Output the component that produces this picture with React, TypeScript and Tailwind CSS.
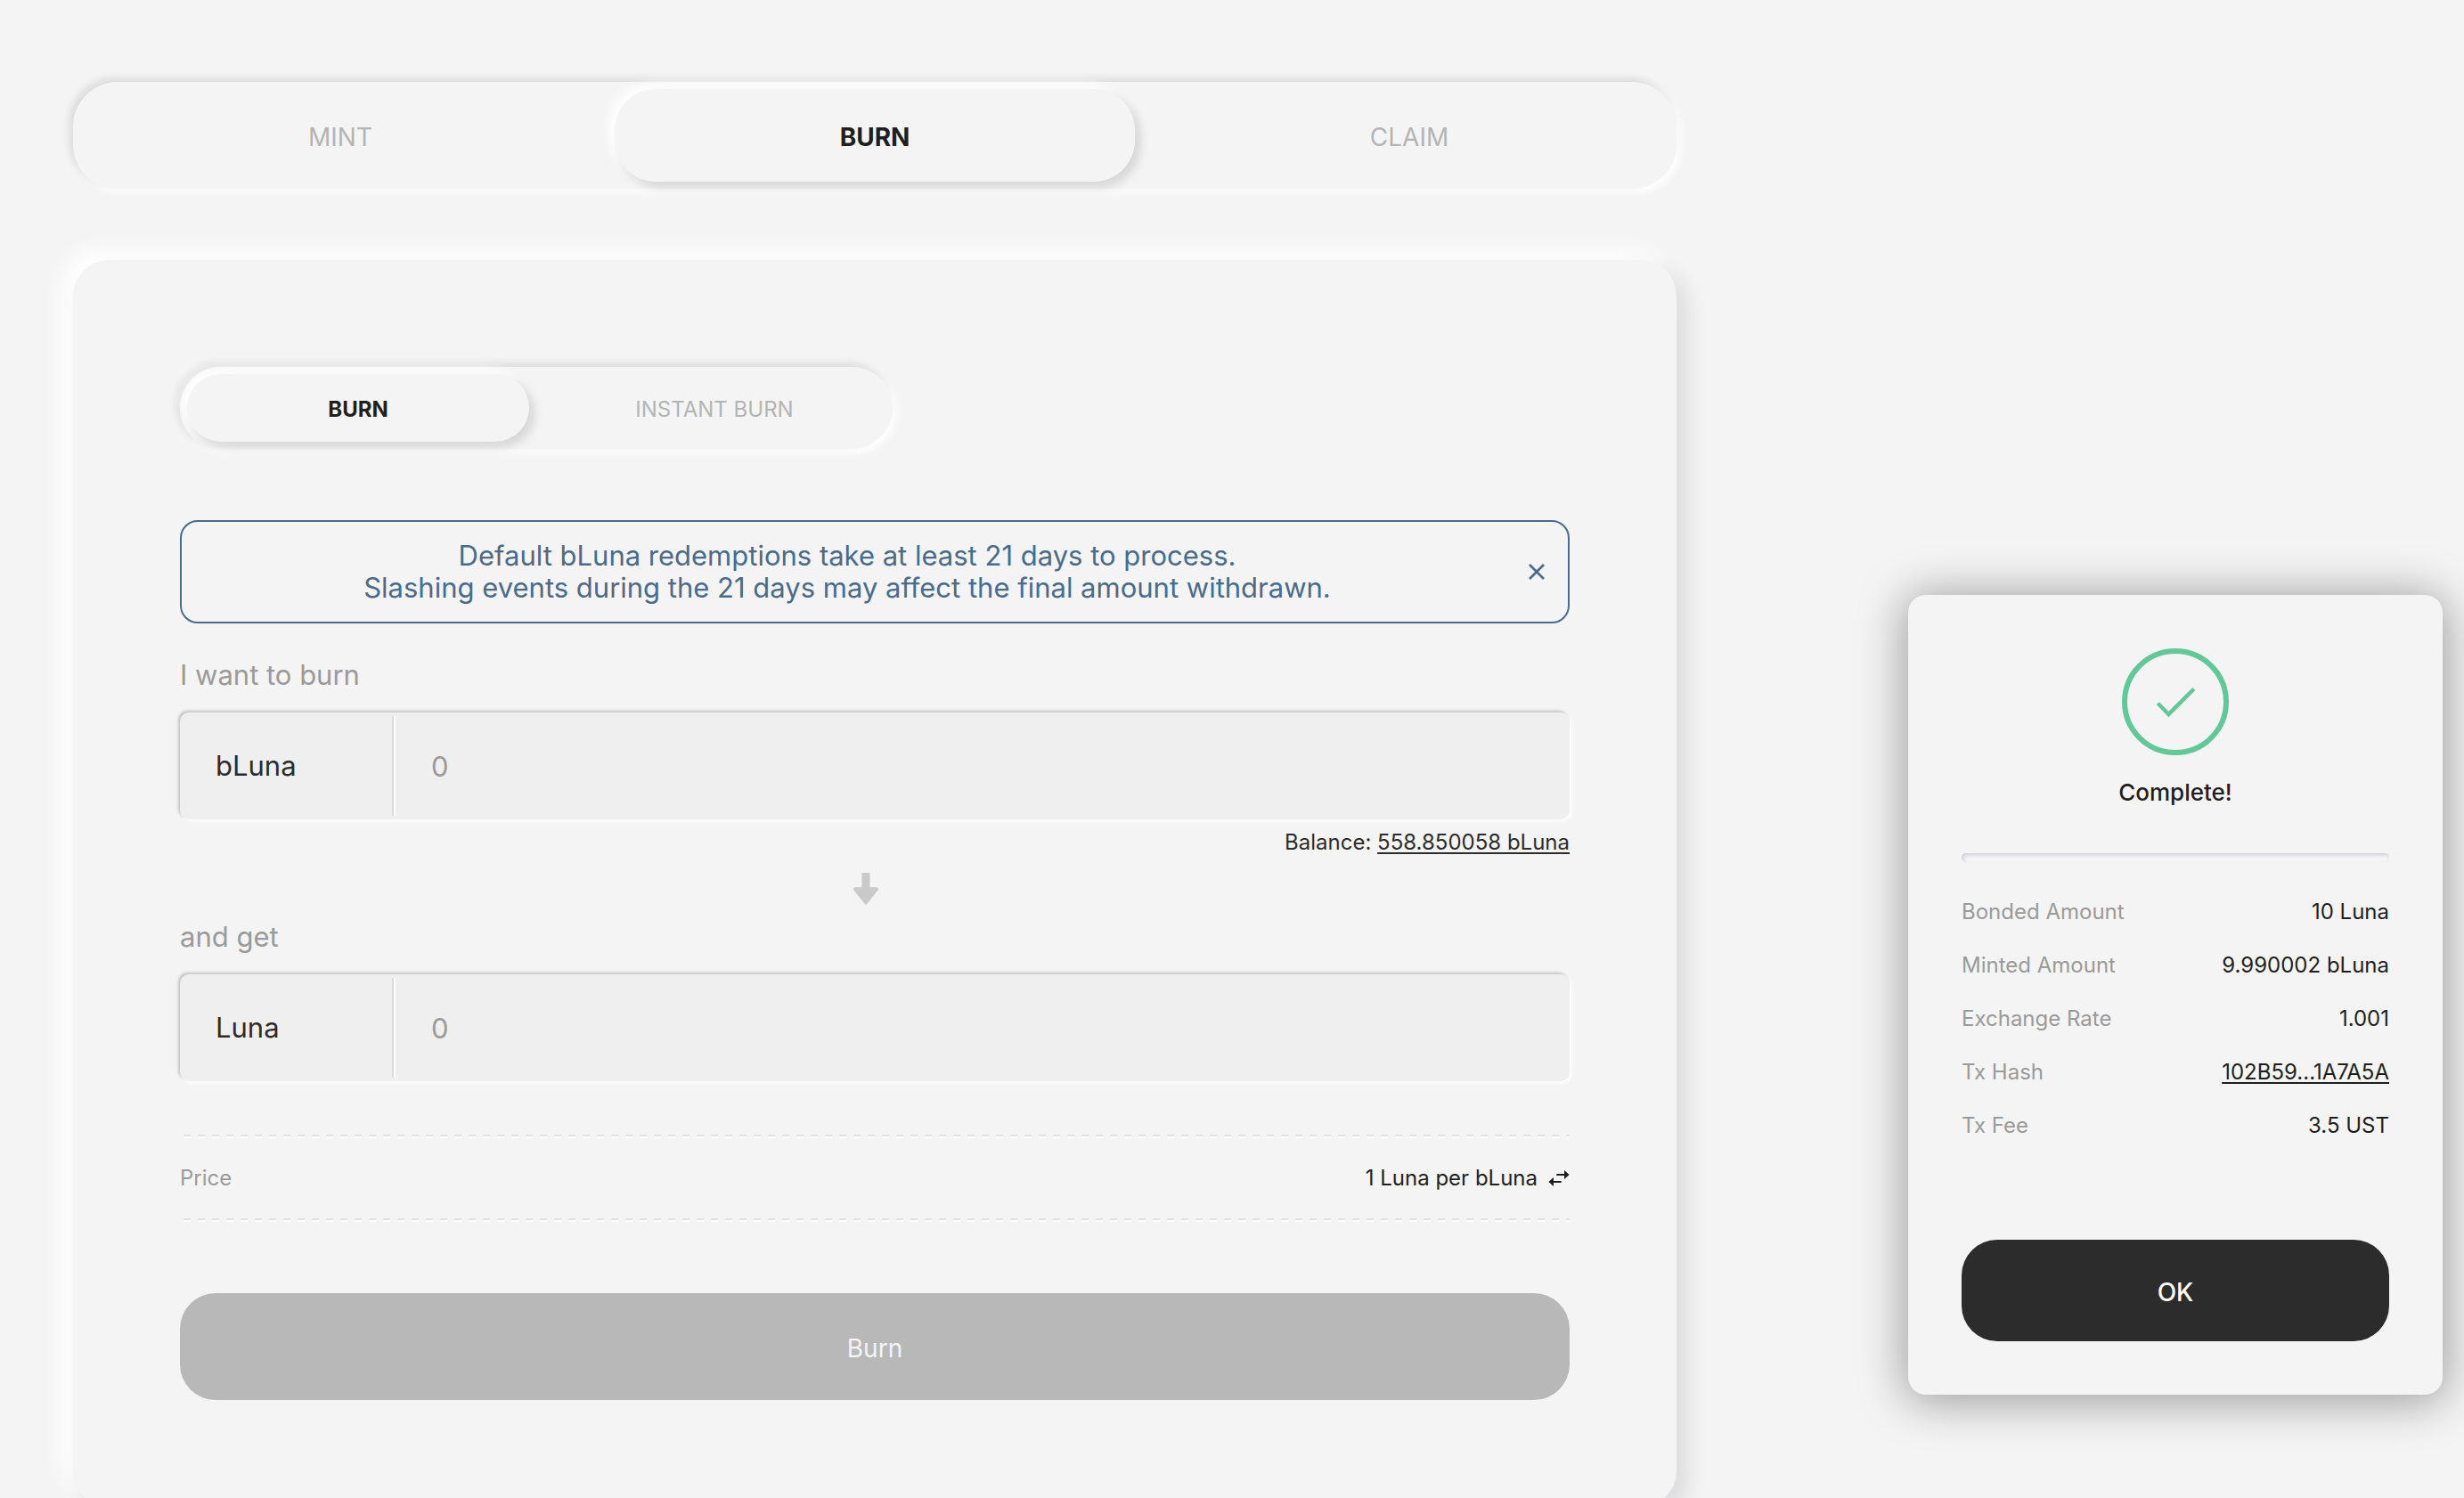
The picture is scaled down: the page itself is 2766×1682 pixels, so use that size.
import { useState } from "react";

function cx(...parts: (string | false)[]) {
  return parts.filter(Boolean).join(" ");
}

const raised =
  "bg-[#f4f4f4] shadow-[6px_6px_12px_rgba(0,0,0,0.13),-6px_-6px_12px_#ffffff]";

function Tabs({
  items,
  initial,
  size,
  label,
}: {
  items: string[];
  initial: string;
  size: "large" | "small";
  label: string;
}) {
  const [active, setActive] = useState(initial);
  return (
    <div
      role="tablist"
      aria-label={label}
      className={cx(
        "grid auto-cols-fr grid-flow-col gap-4 rounded-[50px] bg-[#f4f4f4] p-2 shadow-[-4px_-4px_8px_rgba(30,30,50,0.12),4px_4px_8px_#ffffff]",
        size === "large" ? "h-[120px] text-[28px]" : "h-[92px] w-[800px] text-2xl",
      )}
    >
      {items.map((item) => (
        <button
          key={item}
          role="tab"
          type="button"
          aria-selected={item === active}
          onClick={() => setActive(item)}
          className={cx(
            "rounded-[46px] pt-1 uppercase",
            item === active ? "font-bold text-[#1f1f1f]" : "text-[#b4b4b4]",
            item === active && raised,
          )}
        >
          {item}
        </button>
      ))}
    </div>
  );
}

function AmountField({ id, label, token }: { id: string; label: string; token: string }) {
  return (
    <div>
      <label htmlFor={id} className="block text-[31px] leading-9 text-[#9a9a9a]">
        {label}
      </label>
      <div className="mt-6 flex h-[120px] items-center rounded-[10px] bg-[#efefef] shadow-[-2px_-2px_3px_rgba(60,60,75,0.26),2px_2px_4px_#ffffff]">
        <span className="w-[238px] pl-10 text-[31px] text-[#2c2c2c]">{token}</span>
        <span className="h-28 w-1 border-x-2 border-l-[#dadada] border-r-white" />
        <input
          id={id}
          placeholder="0"
          inputMode="decimal"
          className="h-full min-w-0 flex-1 bg-transparent pl-10 text-[31px] text-[#2c2c2c] outline-none placeholder:text-[#9a9a9a]"
        />
      </div>
    </div>
  );
}

function DashedRule() {
  return (
    <div>
      <div className="ml-1 h-0.5 bg-[repeating-linear-gradient(90deg,#e0e0e0_0_8px,transparent_8px_16px)]" />
      <div className="ml-1 h-0.5 bg-[repeating-linear-gradient(90deg,#ffffff_0_8px,transparent_8px_16px)]" />
    </div>
  );
}

function BurnCard() {
  const [notice, setNotice] = useState(true);
  return (
    <section className="mt-20 rounded-[40px] bg-[#f4f4f4] p-[120px] shadow-[12px_12px_24px_rgba(30,30,50,0.11),-12px_-12px_24px_#ffffff]">
      <Tabs items={["Burn", "Instant burn"]} initial="Burn" size="small" label="Burn mode" />
      {notice && (
        <div className="mt-20 flex items-center rounded-[20px] border-2 border-[#4a6b8a] py-5 pl-8 text-[#4a6b8a]">
          <p className="flex-1 text-center text-[31px] leading-9">
            Default bLuna redemptions take at least 21 days to process.
            <br />
            Slashing events during the 21 days may affect the final amount withdrawn.
          </p>
          <button
            type="button"
            aria-label="Dismiss notice"
            onClick={() => setNotice(false)}
            className="ml-6 flex w-[70px] items-center justify-center self-stretch"
          >
            <svg viewBox="0 0 18 18" className="size-[18px]" stroke="currentColor" strokeWidth="2.6" fill="none">
              <path d="M1 1l16 16M17 1L1 17" />
            </svg>
          </button>
        </div>
      )}
      <div className="mt-10">
        <AmountField id="burn-amount" label="I want to burn" token="bLuna" />
      </div>
      <p className="mt-2.5 text-right text-2xl leading-8 text-[#2c2c2c]">
        Balance:{" "}
        <a href="#max" className="underline decoration-2 underline-offset-3">
          558.850058 bLuna
        </a>
      </p>
      <svg viewBox="0 0 28 36" className="mx-auto mt-[18px] h-9 w-12 pr-5" fill="#c9c9c9" aria-hidden="true">
        <path d="M9.500 0h9v16.300h7.500c1.800 0 2.600 1.900 1.600 3.300L15 35.300c-.5.700-1.500.700-2 0L.4 19.600c-1-1.400-.2-3.300 1.600-3.300h7.500z" />
      </svg>
      <div className="mt-[18px]">
        <AmountField id="receive-amount" label="and get" token="Luna" />
      </div>
      <div className="mt-[60px]">
        <DashedRule />
        <div className="flex h-[90px] items-center justify-between text-2xl">
          <span className="text-[#9a9a9a]">Price</span>
          <span className="flex items-center gap-3 text-[#1f1f1f]">
            1 Luna per bLuna
            <button type="button" aria-label="Switch price direction">
              <svg viewBox="0 0 24 18" className="h-[18px] w-6" fill="currentColor">
                <path d="M18 0L23.600 5l-5.600 5V6.100H9.300V3.900H18zM6 8v3.900h8.700v2.200H6V18L.4 13z" />
              </svg>
            </button>
          </span>
        </div>
        <DashedRule />
      </div>
      <button
        type="button"
        disabled
        className="mt-20 h-[120px] w-full rounded-[40px] bg-[#b8b8b8] pt-1 text-[28px] text-[#f4f4f4]"
      >
        Burn
      </button>
    </section>
  );
}

const receipt = [
  { name: "Bonded Amount", value: "10 Luna" },
  { name: "Minted Amount", value: "9.990002 bLuna" },
  { name: "Exchange Rate", value: "1.001" },
  { name: "Tx Hash", value: "102B59...1A7A5A", href: "#tx" },
  { name: "Tx Fee", value: "3.5 UST" },
];

function ResultDialog() {
  return (
    <section
      role="dialog"
      aria-label="Transaction result"
      className="mt-[668px] self-start rounded-[20px] bg-[#f4f4f4] p-[60px] shadow-[0_4px_52px_4px_rgba(0,0,0,0.36)]"
    >
      <div className="mx-auto flex size-[120px] items-center justify-center rounded-full border-6 border-[#5fc997] text-[#5fc997]">
        <svg viewBox="0 0 45 35" className="h-[35px] w-[45px]" fill="currentColor" aria-hidden="true">
          <path d="M.7 20L3.900 17.200 14.400 27.700 41.300 1 44.400 4.100 14.400 34.300z" />
        </svg>
      </div>
      <h2 className="mt-[26px] text-center text-[26px] leading-8 font-medium text-[#1f1f1f]">Complete!</h2>
      <hr className="mt-[52px] h-2.5 rounded-[5px] border-0 shadow-[inset_1px_1px_5px_rgba(60,60,90,0.28),inset_-2px_-3px_4px_#ffffff]" />
      <dl className="mt-[26px] text-2xl">
        {receipt.map((row) => (
          <div key={row.name} className="flex h-[60px] items-center justify-between">
            <dt className="text-[#9a9a9a]">{row.name}</dt>
            <dd className="text-[#1f1f1f]">
              {row.href ? (
                <a href={row.href} className="underline decoration-2 underline-offset-3">
                  {row.value}
                </a>
              ) : (
                row.value
              )}
            </dd>
          </div>
        ))}
      </dl>
      <button
        type="button"
        className="mt-[98px] h-[114px] w-full rounded-[40px] bg-[#2c2c2c] pt-1 text-[28px] font-medium text-white"
      >
        OK
      </button>
    </section>
  );
}

export default function App() {
  return (
    <main className="grid h-screen grid-cols-[3fr_1fr] gap-x-[260px] overflow-hidden bg-[#f4f4f4] pr-6 pl-[82px] font-['Inter',sans-serif]">
      <div className="pt-[92px]">
        <Tabs items={["Mint", "Burn", "Claim"]} initial="Burn" size="large" label="Bond actions" />
        <BurnCard />
      </div>
      <ResultDialog />
    </main>
  );
}
